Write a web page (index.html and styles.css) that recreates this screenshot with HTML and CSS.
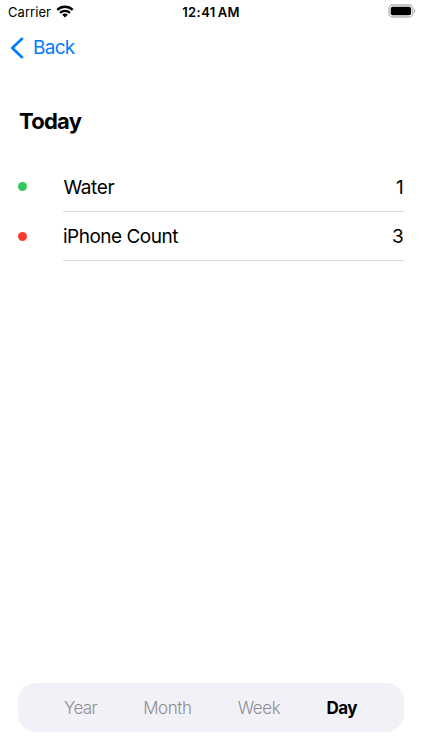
FILE: index.html
```html
<!DOCTYPE html>
<html lang="en">
<head>
<meta charset="utf-8">
<title>Today</title>
<link rel="stylesheet" href="styles.css">
</head>
<body>
<div class="screen">
  <header class="status">
    <div class="carrier"><span class="carrier-name">Carrier</span>
      <svg class="wifi" width="18" height="13" viewBox="0 0 18 13"><path d="M1.3 4.9A11 11 0 0 1 16.7 4.9M4 7.8a7.2 7.2 0 0 1 10 0" fill="none" stroke="#000" stroke-width="2.3"/><path d="M9 12.6 6.2 9.8a4 4 0 0 1 5.6 0Z"/></svg>
    </div>
    <time class="clock">12:41<span class="meridiem">AM</span></time>
    <svg class="battery" width="28" height="14" viewBox="0 0 28 14"><rect x="1" y="1" width="23.8" height="12" rx="3.8" fill="none" stroke="#b5b3b5" stroke-width="1.3"/><rect x="2.7" y="2.7" width="20.4" height="8.6" rx="2"/><path d="M26 5q1.4.5 1.4 2t-1.4 2Z" fill="#b5b3b5"/></svg>
  </header>
  <nav class="nav"><a class="back"><svg width="14" height="22" viewBox="0 0 14 22"><path d="M12 1.8 2.3 11 12 20.2" fill="none" stroke="#007aff" stroke-width="2.6" stroke-linecap="round" stroke-linejoin="round"/></svg><span class="back-label">Back</span></a></nav>
  <main class="content">
    <h1 class="title">Today</h1>
    <ul class="list">
      <li class="item"><i class="dot green"></i><div class="row"><span class="water">Water</span><span class="value">1</span></div></li>
      <li class="item"><i class="dot red"></i><div class="row"><span class="count">iPhone Count</span><span class="value">3</span></div></li>
    </ul>
  </main>
  <footer class="tabs"><span class="year">Year</span><span class="month">Month</span><span class="week">Week</span><span class="day">Day</span></footer>
</div>
</body>
</html>
```

FILE: styles.css
```css
* { box-sizing: border-box; }
body { margin: 0; background: #fff; color: #000; font-family: Inter, "Liberation Sans", sans-serif; }
.screen { width: 422px; height: 750px; display: flex; flex-direction: column; padding-bottom: 18px; }
.status { height: 24px; display: grid; grid-template-columns: 1fr auto 1fr; align-items: center; padding: 0 6px; font-size: 13px; }
.carrier { display: flex; align-items: center; gap: 5px; padding-left: 2px; letter-spacing: .05px; }
.wifi { margin-bottom: 1px; }
.clock { font-weight: 600; font-size: 13px; letter-spacing: .4px; }
.meridiem { margin-left: 2px; letter-spacing: .3px; }
.battery { justify-self: end; margin-bottom: 2px; }
.nav { height: 47px; padding-left: 10px; display: flex; align-items: center; }
.back { display: flex; align-items: center; gap: 9px; color: #007aff; font-size: 19px; letter-spacing: -.7px; }
.content { flex: 1; padding: 35px 18px 0; }
.title { margin: 0; font-size: 22px; line-height: 30px; letter-spacing: -.75px; font-weight: 700; padding-left: 1px; }
.list { list-style: none; margin: 26px 0 0; padding: 0; }
.item { display: flex; align-items: center; height: 49.5px; }
.dot { width: 9.4px; height: 9.4px; border-radius: 50%; margin: 0 35.6px 0 0; }
.green { background: #34c759; }
.red { background: #ff3b30; }
.row { flex: 1; height: 100%; display: flex; justify-content: space-between; align-items: center; padding-top: 2px; border-bottom: 1px solid #dededf; font-size: 19px; letter-spacing: -.5px; }
.water { letter-spacing: -.4px; padding-left: .5px; }
.value { margin-right: .7px; }
.tabs { height: 49px; margin: 0 18px; border-radius: 18px; background: #f2f1f8; display: flex; align-items: center; justify-content: space-between; padding: 0 47px 0 46px; font-size: 17px; letter-spacing: -.4px; font-weight: 300; color: #8e8d93; }
.year { letter-spacing: -.6px; }
.day { color: #000; font-weight: 700; letter-spacing: -.5px; }
```
